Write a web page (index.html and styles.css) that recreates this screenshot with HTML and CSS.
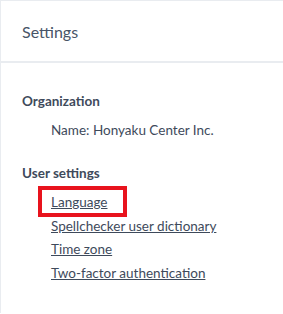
FILE: index.html
```html
<!DOCTYPE html>
<html>
<head>
<meta charset="utf-8">
<link rel="stylesheet" href="styles.css">
</head>
<body>
<div class="panel">
  <div class="header"><h1 class="title">Settings</h1></div>
  <div class="body">
    <h2 class="section">Organization</h2>
    <ul class="list">
      <li class="item">Name: Honyaku Center Inc.</li>
    </ul>
    <h2 class="section">User settings</h2>
    <ul class="list">
      <li class="item"><a class="link highlight" href="#">Language</a></li>
      <li class="item"><a class="link" href="#">Spellchecker user dictionary</a></li>
      <li class="item"><a class="link" href="#">Time zone</a></li>
      <li class="item"><a class="link" href="#">Two-factor authentication</a></li>
    </ul>
  </div>
</div>
</body>
</html>
```
FILE: styles.css
```css
html, body {
  margin: 0;
  padding: 0;
  background: #ffffff;
}
body {
  font-family: Lato, "Liberation Sans", sans-serif;
  color: #3e4a5b;
  width: 283px;
  height: 314px;
  overflow: hidden;
}
.panel {
  border-top: 1px solid #e9ecf0;
  border-left: 1px solid #e9ecf0;
  height: 313px;
  box-sizing: border-box;
}
.header {
  height: 60px;
  border-bottom: 2px solid #e9ecf0;
  display: flex;
  align-items: center;
  padding-left: 21px;
}
.title {
  margin: 0;
  font-size: 16px;
  font-weight: 400;
  color: #475467;
}
.body {
  padding: 29px 0 0 21px;
}
.section {
  margin: 0;
  font-size: 13.5px;
  font-weight: 700;
  line-height: 18px;
}
.list {
  list-style: none;
  margin: 11px 0 0 0;
  padding: 0 0 25px 29px;
  display: flex;
  flex-direction: column;
  gap: 5.7px;
}
.item {
  font-size: 13.5px;
  line-height: 18px;
}
.link {
  color: #3e4a5b;
  text-decoration: underline;
}
.highlight {
  display: inline-block;
  position: relative;
}
.highlight::after {
  content: "";
  position: absolute;
  left: -13px;
  right: -20px;
  top: -7px;
  bottom: -6px;
  border: 4px solid #e8131d;
}
```
